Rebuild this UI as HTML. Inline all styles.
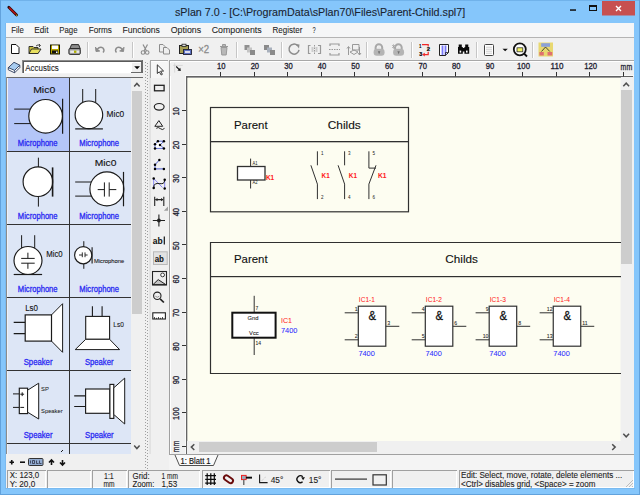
<!DOCTYPE html>
<html><head><meta charset="utf-8"><style>
*{margin:0;padding:0}html,body{width:640px;height:495px;overflow:hidden;background:#85c6fb}
svg{display:block;font-family:"Liberation Sans",sans-serif}
</style></head><body>
<svg width="640" height="495" viewBox="0 0 640 495">
<rect x="0" y="0" width="640" height="1" fill="#70b2ea" />
<rect x="0" y="0" width="1" height="495" fill="#62a2dc" />
<rect x="639" y="0" width="1" height="495" fill="#62a2dc" />
<rect x="0" y="494" width="640" height="1" fill="#62a2dc" />
<rect x="5" y="23" width="1" height="466" fill="#7abaf0" />
<rect x="5" y="488" width="630" height="1" fill="#7abaf0" />
<path d="M8.8 7.2 L16.6 15" stroke="#2a0808" fill="none" stroke-width="2.8" stroke-linecap="round"/>
<path d="M9 7.4 L15.8 14.2" stroke="#b01414" fill="none" stroke-width="1.6" />
<rect x="16" y="14.6" width="1.2" height="1.2" fill="#c8b020" />
<text x="175.00" y="15.5" font-size="11.5" fill="#1a2430" stroke="#1a2430" stroke-width="0.1" textLength="290.18" lengthAdjust="spacingAndGlyphs" >sPlan 7.0 - [C:\ProgramData\sPlan70\Files\Parent-Child.spl7]</text>
<rect x="570" y="9.3" width="6" height="1.5" fill="#111" />
<rect x="589.5" y="5.5" width="7" height="5" fill="none" stroke="#111" stroke-width="1"/>
<rect x="589" y="5" width="8" height="2" fill="#111" />
<rect x="602" y="1" width="33" height="14.5" fill="#c75050" />
<path d="M16 6 L21 11 M21 6 L16 11" stroke="#fff" fill="none" stroke-width="1.4" transform="translate(600,0)"/>
<rect x="6" y="23" width="628" height="14" fill="#f5f6f7" />
<rect x="6" y="37" width="628" height="1" fill="#b4b4b4" />
<text x="11.25" y="33" font-size="9.8" fill="#1e1e1e" stroke="#1e1e1e" stroke-width="0.08" textLength="12.56" lengthAdjust="spacingAndGlyphs" >File</text>
<text x="34.25" y="33" font-size="9.8" fill="#1e1e1e" stroke="#1e1e1e" stroke-width="0.08" textLength="14.26" lengthAdjust="spacingAndGlyphs" >Edit</text>
<text x="59.25" y="33" font-size="9.8" fill="#1e1e1e" stroke="#1e1e1e" stroke-width="0.08" textLength="18.31" lengthAdjust="spacingAndGlyphs" >Page</text>
<text x="88.75" y="33" font-size="9.8" fill="#1e1e1e" stroke="#1e1e1e" stroke-width="0.08" textLength="23.17" lengthAdjust="spacingAndGlyphs" >Forms</text>
<text x="122.50" y="33" font-size="9.8" fill="#1e1e1e" stroke="#1e1e1e" stroke-width="0.08" textLength="37.41" lengthAdjust="spacingAndGlyphs" >Functions</text>
<text x="170.75" y="33" font-size="9.8" fill="#1e1e1e" stroke="#1e1e1e" stroke-width="0.08" textLength="30.41" lengthAdjust="spacingAndGlyphs" >Options</text>
<text x="211.75" y="33" font-size="9.8" fill="#1e1e1e" stroke="#1e1e1e" stroke-width="0.08" textLength="49.91" lengthAdjust="spacingAndGlyphs" >Components</text>
<text x="272.50" y="33" font-size="9.8" fill="#1e1e1e" stroke="#1e1e1e" stroke-width="0.08" textLength="29.90" lengthAdjust="spacingAndGlyphs" >Register</text>
<text x="312.50" y="33" font-size="9.8" fill="#1e1e1e" stroke="#1e1e1e" stroke-width="0.08" textLength="3.18" lengthAdjust="spacingAndGlyphs" >?</text>
<rect x="6" y="38" width="628" height="23" fill="#f0f0f0" />
<rect x="87" y="42" width="1" height="16" fill="#c6c6c6" />
<rect x="88" y="42" width="1" height="16" fill="#ffffff" />
<rect x="132" y="42" width="1" height="16" fill="#c6c6c6" />
<rect x="133" y="42" width="1" height="16" fill="#ffffff" />
<rect x="236" y="42" width="1" height="16" fill="#c6c6c6" />
<rect x="237" y="42" width="1" height="16" fill="#ffffff" />
<rect x="281" y="42" width="1" height="16" fill="#c6c6c6" />
<rect x="282" y="42" width="1" height="16" fill="#ffffff" />
<rect x="366" y="42" width="1" height="16" fill="#c6c6c6" />
<rect x="367" y="42" width="1" height="16" fill="#ffffff" />
<rect x="411" y="42" width="1" height="16" fill="#c6c6c6" />
<rect x="412" y="42" width="1" height="16" fill="#ffffff" />
<rect x="476" y="42" width="1" height="16" fill="#c6c6c6" />
<rect x="477" y="42" width="1" height="16" fill="#ffffff" />
<rect x="532" y="42" width="1" height="16" fill="#c6c6c6" />
<rect x="533" y="42" width="1" height="16" fill="#ffffff" />
<path d="M11.5 44.5 H16 L19 47.5 V53.5 H11.5 Z" stroke="#111" fill="#fff" stroke-width="1" />
<path d="M29 46.5 H33 L34 47.5 H38 V53.5 H29 Z" stroke="#222" fill="#c8c040" stroke-width="0.9" />
<path d="M29 53.5 L31.5 49 H41 L38 53.5 Z" stroke="#222" fill="#e8e060" stroke-width="0.9" />
<path d="M36 46 Q38 44 40 45.5 M39 44 L40.5 45.5 L39 47" stroke="#333" fill="none" stroke-width="0.9" />
<rect x="50" y="44.5" width="10" height="10" fill="#1a1a00" />
<rect x="51" y="45.5" width="8" height="8" fill="#b8a800" />
<rect x="52" y="45.5" width="6" height="3.5" fill="#fff" />
<rect x="52" y="50.5" width="6" height="3" fill="#111" />
<rect x="56" y="51.5" width="1.5" height="1.5" fill="#fff" />
<path d="M71.5 44.6 H78.6 L80.3 48.8 H69.8 Z" stroke="#1a1a1a" fill="#8c8c8c" stroke-width="0.9" />
<rect x="68.9" y="48.6" width="11.4" height="5.8" rx="1.2" fill="#a8a8a8" stroke="#1a1a1a" stroke-width="0.9"/>
<rect x="70.2" y="50.6" width="9" height="2.3" fill="#e8e8e8" />
<rect x="74" y="50.6" width="2.4" height="2.3" fill="#b0b000" />
<path d="M97 49.5 Q100 46 103 48 Q105 50.5 103 52.5" stroke="#8c8c8c" fill="none" stroke-width="1.4" />
<path d="M95.5 47 L96 51.5 L100 51" stroke="#8c8c8c" fill="#8c8c8c" stroke-width="1" />
<path d="M122.5 49.5 Q119.5 46 116.5 48 Q114.5 50.5 116.5 52.5" stroke="#8c8c8c" fill="none" stroke-width="1.4" />
<path d="M124 47 L123.5 51.5 L119.5 51" stroke="#8c8c8c" fill="#8c8c8c" stroke-width="1" />
<path d="M143 44.5 L146.5 51 M147.5 44.5 L144 51" stroke="#8c8c8c" fill="none" stroke-width="1.2" />
<circle cx="143" cy="52.5" r="1.8" fill="none" stroke="#8c8c8c" stroke-width="1.1"/>
<circle cx="147.2" cy="52.5" r="1.8" fill="none" stroke="#8c8c8c" stroke-width="1.1"/>
<path d="M159.5 44.5 H163 L165 46.5 V52 H159.5 Z" stroke="#8c8c8c" fill="#eee" stroke-width="1" />
<path d="M163.5 47.5 H167 L169.5 50 V54 H163.5 Z" stroke="#8c8c8c" fill="#eee" stroke-width="1" />
<rect x="179.5" y="45.5" width="9" height="8" fill="#a69e52" stroke="#222" stroke-width="1"/>
<rect x="182" y="44.2" width="4" height="2.2" fill="#ddd" stroke="#222" stroke-width="0.8"/>
<rect x="183.5" y="49.5" width="8" height="5" fill="#5a70c0" stroke="#223" stroke-width="0.9"/>
<rect x="185" y="51" width="5" height="2" fill="#dde" />
<text x="198.20" y="52.7" font-size="10" fill="#8c8c8c" stroke="#8c8c8c" stroke-width="0.28" textLength="10.98" lengthAdjust="spacingAndGlyphs" >×2</text>
<path d="M220 46.5 H228 M222.5 46.5 V44.5 H225.5 V46.5 M221 47.5 L221.8 55 H226.2 L227 47.5 Z" stroke="#999" fill="#b8b8b8" stroke-width="1" />
<rect x="244.5" y="45" width="5" height="5" fill="#909090" />
<rect x="247" y="47.5" width="5" height="5" fill="#c4c4c4" />
<rect x="250" y="50" width="5" height="5" fill="#8a8a8a" />
<rect x="264" y="45" width="5" height="5" fill="#8a8a8a" />
<rect x="267" y="47.5" width="5" height="5" fill="#a8b0bc" />
<rect x="270" y="50" width="5" height="5" fill="#8a8a8a" />
<path d="M299 49.8 A5 5 0 1 1 297.5 45.5" stroke="#8c8c8c" fill="none" stroke-width="1.5" />
<path d="M295.5 44 L299.5 44.5 L299 48.5 Z" stroke="none" fill="#8c8c8c" stroke-width="1" />
<path d="M310.5 45.5 H308.5 V53.5 H310.5 M318 45.5 H320.5 V53.5 H318" stroke="#999" fill="none" stroke-width="1.2" />
<path d="M314.5 45 V54" stroke="#999" fill="none" stroke-width="1" stroke-dasharray="1.5 1"/>
<rect x="311.5" y="47" width="2" height="5" fill="#ccc" />
<rect x="315.5" y="47" width="2" height="5" fill="#ccc" />
<path d="M330 46 V44 H339 V46 M330 53 V55 H339 V53" stroke="#999" fill="none" stroke-width="1.2" />
<path d="M329 49.5 H340" stroke="#999" fill="none" stroke-width="1" stroke-dasharray="1.5 1"/>
<path d="M352.5 44.5 H359 V50 H352.5 Z" stroke="#999" fill="none" stroke-width="1" />
<path d="M348.5 55 V47 M347 48.5 L348.5 46.5 L350 48.5 M359.5 47 V55 M358 53 L359.5 55 L361 53 M350 52 L354 50 L358 52 L354 54.5 Z" stroke="#999" fill="none" stroke-width="1" />
<path d="M375.6 49.5 V47.6 A3.3 3.3 0 0 1 382.2 47.6 V49.5" stroke="#a8a8a8" fill="none" stroke-width="2" />
<rect x="373.6" y="48.8" width="11" height="7" rx="3.2" fill="#b4b4b4"/>
<path d="M377.9 51.3 H380.3 L379.1 54.3 Z" stroke="none" fill="#707070" stroke-width="1" />
<rect x="378.4" y="46.5" width="1.5" height="1.5" fill="#e8e8e8" />
<path d="M395.1 49.5 V47.6 A3.3 3.3 0 0 1 401.7 47.6 V49.5" stroke="#a8a8a8" fill="none" stroke-width="2" />
<rect x="393.1" y="48.8" width="11" height="7" rx="3.2" fill="#b4b4b4"/>
<path d="M397.4 51.3 H399.8 L398.6 54.3 Z" stroke="none" fill="#707070" stroke-width="1" />
<rect x="397.9" y="46.5" width="1.5" height="1.5" fill="#e8e8e8" />
<path d="M392 45 L395 48 M395 45 L392 48 M393.5 44.3 V48.7" stroke="#a0a0a0" fill="none" stroke-width="0.7" />
<text x="419.20" y="48.2" font-size="5.4" fill="#000" stroke="#000" stroke-width="0.2" font-weight="bold" textLength="2.00" lengthAdjust="spacingAndGlyphs" >1</text>
<text x="426.70" y="51" font-size="5.4" fill="#000" stroke="#000" stroke-width="0.2" font-weight="bold" textLength="3.30" lengthAdjust="spacingAndGlyphs" >2</text>
<text x="419.20" y="56.2" font-size="5.4" fill="#000" stroke="#000" stroke-width="0.2" font-weight="bold" textLength="3.00" lengthAdjust="spacingAndGlyphs" >3</text>
<path d="M422 44.6 H428.2 V46.4 M428.2 51.8 V54.6 H424" stroke="#f02828" fill="none" stroke-width="1.2" />
<path d="M424.8 53.2 L422.6 54.6 L424.8 56" stroke="#f02828" fill="#f02828" stroke-width="0.8" />
<path d="M439.5 44.5 H448.5 V52.5 L445.5 55.5 H439.5 Z" stroke="#222" fill="#fff" stroke-width="1" />
<rect x="441.6" y="45.5" width="1.8" height="9.5" fill="#7878f8" />
<rect x="444.6" y="45.5" width="1.8" height="9.5" fill="#7878f8" />
<path d="M445.5 55.5 V52.5 H448.5" stroke="#222" fill="none" stroke-width="0.8" />
<path d="M458.7 44.5 H461.8 V47 H462.8 V53.7 H458 V47 H458.7 Z M465.2 44.5 H468.3 V47 H469.2 V53.7 H464.4 V47 H465.2 Z M462.5 48 H464.7 V51.5 H462.5 Z" stroke="none" fill="#0a0a0a" stroke-width="1" />
<rect x="459.6" y="50.6" width="1.6" height="2" fill="#fff" />
<rect x="466" y="50.6" width="1.6" height="2" fill="#fff" />
<rect x="484.5" y="44.5" width="9" height="11" rx="1" fill="#fff" stroke="#444" stroke-width="1"/>
<path d="M487 46 V54 M489 46 V54 M491 46 V54 M486 47.5 H492 M486 49.5 H492 M486 51.5 H492 M486 53.5 H492" stroke="#d0d0d0" fill="none" stroke-width="0.6" />
<path d="M502.5 48.8 H507.8 L505.15 51.3 Z" stroke="none" fill="#111" stroke-width="1" />
<circle cx="519.8" cy="49.3" r="6" fill="#fff" stroke="#111" stroke-width="1.8"/>
<rect x="517" y="47.8" width="5.8" height="4" fill="#f0f060" stroke="#333" stroke-width="0.8"/>
<path d="M524 53.5 L527 56.5" stroke="#111" fill="none" stroke-width="1.8" />
<rect x="538.5" y="42.5" width="14.5" height="14" fill="#e8d870" />
<rect x="541.2" y="43.2" width="8.8" height="3.6" fill="#8aa0d8" />
<rect x="539.4" y="52" width="4.4" height="3.5" fill="#e07070" />
<rect x="547.5" y="52" width="4.8" height="3.5" fill="#e07070" />
<path d="M545.5 47 L541.5 51.5 M545.5 47 L549.8 51.5" stroke="#222" fill="none" stroke-width="0.8" />
<rect x="6" y="61" width="628" height="409" fill="#f0f0f0" />
<path d="M8.3 67.6 V69.8 L14.6 72.8 L19.8 67.6 V65.2 Z" stroke="#2a3a5a" fill="#fff" stroke-width="0.9" />
<path d="M8.3 67.6 L14 62.3 L19.8 65.2 L14.6 70.4 Z" stroke="#2a3a5a" fill="#a8ccf0" stroke-width="0.9" />
<path d="M14.6 70.4 V72.8" stroke="#2a3a5a" fill="none" stroke-width="0.8" />
<rect x="22" y="60" width="121" height="14" fill="#fff" />
<rect x="22" y="60" width="121" height="1" fill="#8a8a8a" />
<rect x="22" y="60" width="1" height="14" fill="#8a8a8a" />
<rect x="23" y="61" width="119" height="1" fill="#5a5a5a" />
<rect x="23" y="61" width="1" height="12" fill="#5a5a5a" />
<rect x="142" y="60" width="1" height="14" fill="#6a6a6a" />
<rect x="22" y="73" width="121" height="1" fill="#f4f4f4" />
<rect x="131" y="62" width="11" height="11" fill="#efefef" />
<rect x="131" y="62" width="11" height="1" fill="#fff" />
<rect x="131" y="62" width="1" height="11" fill="#fff" />
<rect x="131" y="72" width="11" height="1" fill="#6a6a6a" />
<rect x="141" y="62" width="1" height="11" fill="#6a6a6a" />
<path d="M134.2 66.3 L140 66.3 L137.1 69.2 Z" stroke="none" fill="#000" stroke-width="1" />
<text x="25.30" y="70.5" font-size="9.6" fill="#222" stroke="#222" stroke-width="0.1" textLength="33.53" lengthAdjust="spacingAndGlyphs" >Accustics</text>
<rect x="6" y="77" width="137" height="1.5" fill="#6a6a6a" />
<rect x="6" y="77" width="1" height="377" fill="#8c8c8c" />
<rect x="7" y="78" width="124" height="376" fill="#dde6f6" />
<rect x="7" y="78" width="62" height="73" fill="#b4c6f8" />
<rect x="7" y="78" width="1" height="376" fill="#eef2fa" />
<rect x="7" y="151" width="124" height="1" fill="#333" />
<rect x="7" y="224" width="124" height="1" fill="#333" />
<rect x="7" y="297" width="124" height="1" fill="#333" />
<rect x="7" y="370" width="124" height="1" fill="#333" />
<rect x="7" y="443" width="124" height="1" fill="#333" />
<rect x="69" y="78" width="1" height="376" fill="#333" />
<text x="17.80" y="146" font-size="8.6" fill="#2a2af2" stroke="#2a2af2" stroke-width="0.3" textLength="39.80" lengthAdjust="spacingAndGlyphs" >Microphone</text>
<text x="79.30" y="146" font-size="8.6" fill="#2a2af2" stroke="#2a2af2" stroke-width="0.3" textLength="39.80" lengthAdjust="spacingAndGlyphs" >Microphone</text>
<text x="17.80" y="219" font-size="8.6" fill="#2a2af2" stroke="#2a2af2" stroke-width="0.3" textLength="39.80" lengthAdjust="spacingAndGlyphs" >Microphone</text>
<text x="79.30" y="218.6" font-size="8.6" fill="#2a2af2" stroke="#2a2af2" stroke-width="0.3" textLength="39.80" lengthAdjust="spacingAndGlyphs" >Microphone</text>
<text x="17.80" y="291.6" font-size="8.6" fill="#2a2af2" stroke="#2a2af2" stroke-width="0.3" textLength="39.80" lengthAdjust="spacingAndGlyphs" >Microphone</text>
<text x="79.30" y="291.6" font-size="8.6" fill="#2a2af2" stroke="#2a2af2" stroke-width="0.3" textLength="39.80" lengthAdjust="spacingAndGlyphs" >Microphone</text>
<text x="23.70" y="364.6" font-size="8.6" fill="#2a2af2" stroke="#2a2af2" stroke-width="0.3" textLength="28.78" lengthAdjust="spacingAndGlyphs" >Speaker</text>
<text x="85.00" y="364.6" font-size="8.6" fill="#2a2af2" stroke="#2a2af2" stroke-width="0.3" textLength="28.48" lengthAdjust="spacingAndGlyphs" >Speaker</text>
<text x="23.70" y="437.6" font-size="8.6" fill="#2a2af2" stroke="#2a2af2" stroke-width="0.3" textLength="28.78" lengthAdjust="spacingAndGlyphs" >Speaker</text>
<text x="85.00" y="437.6" font-size="8.6" fill="#2a2af2" stroke="#2a2af2" stroke-width="0.3" textLength="28.68" lengthAdjust="spacingAndGlyphs" >Speaker</text>
<text x="33.20" y="93" font-size="9.2" fill="#111" stroke="#111" stroke-width="0.12" textLength="22.02" lengthAdjust="spacingAndGlyphs" >Mic0</text>
<path d="M14.2 109.1 H30 M14.2 123.6 H30" stroke="#1a1a1a" fill="none" stroke-width="1" />
<circle cx="45.6" cy="116.3" r="16.8" fill="#fff" stroke="#1a1a1a" stroke-width="1.15"/>
<path d="M62.6 98.7 V133.8" stroke="#1a1a1a" fill="none" stroke-width="1.2" />
<path d="M82.7 89 V102 M95.7 89 V102" stroke="#1a1a1a" fill="none" stroke-width="1" />
<circle cx="88.9" cy="114.8" r="13.8" fill="#fff" stroke="#1a1a1a" stroke-width="1.15"/>
<path d="M75.2 128.9 H102.9" stroke="#1a1a1a" fill="none" stroke-width="1.2" />
<text x="106.60" y="116.6" font-size="8.4" fill="#111" stroke="#111" stroke-width="0.1" textLength="17.66" lengthAdjust="spacingAndGlyphs" >Mic0</text>
<path d="M38.4 157.7 V167 M38.4 196.6 V206.6" stroke="#1a1a1a" fill="none" stroke-width="1" />
<circle cx="37.9" cy="181.7" r="14.8" fill="#fff" stroke="#1a1a1a" stroke-width="1.15"/>
<path d="M52.6 167.4 V196.6" stroke="#1a1a1a" fill="none" stroke-width="1.6" />
<text x="94.70" y="166.2" font-size="9.2" fill="#111" stroke="#111" stroke-width="0.12" textLength="21.72" lengthAdjust="spacingAndGlyphs" >Mic0</text>
<path d="M75.2 182 H91.5 M75.2 196.1 H91.5" stroke="#1a1a1a" fill="none" stroke-width="1" />
<circle cx="106.9" cy="188.9" r="17" fill="#fff" stroke="#1a1a1a" stroke-width="1.15"/>
<path d="M123.5 171.9 V206.3" stroke="#1a1a1a" fill="none" stroke-width="1.2" />
<path d="M104.4 182.4 V196.6 M109.2 182.4 V196.6 M97.7 189.6 H104.4 M109.2 189.6 H116.3" stroke="#1a1a1a" fill="none" stroke-width="1" />
<path d="M21.6 235.2 V248.5 M34.7 235.2 V248.5" stroke="#1a1a1a" fill="none" stroke-width="1" />
<circle cx="28" cy="260.5" r="14" fill="#fff" stroke="#1a1a1a" stroke-width="1.15"/>
<path d="M13.7 274.5 H42.1" stroke="#1a1a1a" fill="none" stroke-width="1.2" />
<path d="M21.2 258.4 H34.7 M21.2 263.2 H34.7 M27.9 252.7 V258.4 M27.9 263.2 V268.8" stroke="#1a1a1a" fill="none" stroke-width="1" />
<text x="46.20" y="256.6" font-size="8.4" fill="#111" stroke="#111" stroke-width="0.1" textLength="16.48" lengthAdjust="spacingAndGlyphs" >Mic0</text>
<path d="M83.8 241.2 V246.8 M83.8 263.8 V268.8" stroke="#1a1a1a" fill="none" stroke-width="1" />
<circle cx="83.2" cy="255.2" r="8.6" fill="#fff" stroke="#1a1a1a" stroke-width="1.15"/>
<path d="M92.1 247.2 V263.6" stroke="#1a1a1a" fill="none" stroke-width="1.1" />
<path d="M82.3 252.4 V257.2 M85 252.4 V257.2 M79 255 H82.3 M85 255 H87.6" stroke="#1a1a1a" fill="none" stroke-width="0.9" />
<text x="93.90" y="262.6" font-size="5.5" fill="#111" stroke="#111" stroke-width="0.07500000000000001" textLength="30.26" lengthAdjust="spacingAndGlyphs" >Microphone</text>
<text x="25.20" y="310.8" font-size="8.4" fill="#111" stroke="#111" stroke-width="0.1" textLength="12.87" lengthAdjust="spacingAndGlyphs" >Ls0</text>
<path d="M13.7 322.4 H25.2 M13.7 333.6 H25.2" stroke="#1a1a1a" fill="none" stroke-width="1.2" />
<path d="M51.5 314.9 L62.6 303.7 V352.3 L51.5 341.1 Z" stroke="#1a1a1a" fill="#fff" stroke-width="1" />
<rect x="25.2" y="314.9" width="26.3" height="26.2" fill="#fff" stroke="#1a1a1a" stroke-width="1.2"/>
<path d="M92.4 306.3 V316.4 M102.1 306.3 V316.4" stroke="#1a1a1a" fill="none" stroke-width="1.1" />
<rect x="85.7" y="316.4" width="23.9" height="22.9" fill="#fff" stroke="#1a1a1a" stroke-width="1.1"/>
<path d="M85.7 339.3 H109.6 L119.6 349.6 H75.2 Z" stroke="#1a1a1a" fill="#fff" stroke-width="1" />
<text x="113.30" y="326.6" font-size="7.2" fill="#111" stroke="#111" stroke-width="0.08" textLength="10.50" lengthAdjust="spacingAndGlyphs" >Ls0</text>
<path d="M13 393.9 H19.3 M13 407.4 H19.3" stroke="#1a1a1a" fill="none" stroke-width="1" />
<rect x="19.3" y="388.2" width="8.3" height="25.4" fill="#fff" stroke="#1a1a1a" stroke-width="1.15"/>
<path d="M27.6 390.2 L38.7 383.2 V419 L27.6 412.2 Z" stroke="#1a1a1a" fill="#fff" stroke-width="1" />
<path d="M20.3 394.2 H24.1 M22.2 392.3 V396.1 M20.3 407.4 H24.1" stroke="#1a1a1a" fill="none" stroke-width="1" />
<text x="41.10" y="390.6" font-size="6" fill="#222" stroke="#222" stroke-width="0.05" textLength="7.80" lengthAdjust="spacingAndGlyphs" >SP</text>
<text x="41.10" y="412.6" font-size="6" fill="#222" stroke="#222" stroke-width="0.05" textLength="21.50" lengthAdjust="spacingAndGlyphs" >Speaker</text>
<path d="M74.2 395.8 H85.6 M74.2 406.5 H85.6" stroke="#1a1a1a" fill="none" stroke-width="1.2" />
<rect x="85.6" y="389" width="24.3" height="24.3" fill="#fff" stroke="#1a1a1a" stroke-width="1.15"/>
<rect x="109.9" y="384.4" width="3.9" height="34" fill="#fff" stroke="#1a1a1a" stroke-width="1.15"/>
<path d="M113.8 387.8 L124.7 378.1 V424 L113.8 414.5 Z" stroke="#1a1a1a" fill="#fff" stroke-width="1" />
<path d="M61 452 L63 450" stroke="#1a1a1a" fill="none" stroke-width="1" />
<rect x="131" y="78" width="12" height="376" fill="#f0f0f0" />
<rect x="132" y="91" width="10" height="223" fill="#cdcdcd" />
<path d="M134.2 86.4 L136.9 83.4 L139.6 86.4" stroke="#505050" fill="none" stroke-width="1.5" />
<path d="M134.2 445.6 L136.9 448.6 L139.6 445.6" stroke="#505050" fill="none" stroke-width="1.5" />
<rect x="6" y="454" width="138" height="16" fill="#f0f0f0" />
<path d="M9.5 462.2 H14 M11.75 460 V464.5" stroke="#111" fill="none" stroke-width="1.6" />
<path d="M20 462.2 H25" stroke="#111" fill="none" stroke-width="1.6" />
<rect x="28.5" y="458.5" width="14.5" height="7" rx="1" fill="#93acd0" stroke="#333" stroke-width="1"/>
<path d="M30.5 460.5 v3 M32.5 460.5 h2 v3 h-2 z M36.5 460.5 v3 h2 M39.5 460.5 v3 h2" stroke="#223" fill="none" stroke-width="0.7" />
<path d="M51.5 465 V461 M49 462.5 L51.5 460 L54 462.5" stroke="#111" fill="none" stroke-width="1.6" />
<path d="M62.5 460 V464 M60 462.5 L62.5 465 L65 462.5" stroke="#111" fill="none" stroke-width="1.6" />
<rect x="145" y="62" width="1" height="1" fill="#a0a0a0" />
<rect x="147" y="63" width="1" height="1" fill="#a0a0a0" />
<rect x="145" y="65" width="1" height="1" fill="#a0a0a0" />
<rect x="147" y="66" width="1" height="1" fill="#a0a0a0" />
<rect x="145" y="68" width="1" height="1" fill="#a0a0a0" />
<rect x="147" y="69" width="1" height="1" fill="#a0a0a0" />
<rect x="145" y="71" width="1" height="1" fill="#a0a0a0" />
<rect x="147" y="72" width="1" height="1" fill="#a0a0a0" />
<rect x="145" y="74" width="1" height="1" fill="#a0a0a0" />
<rect x="147" y="75" width="1" height="1" fill="#a0a0a0" />
<rect x="145" y="77" width="1" height="1" fill="#a0a0a0" />
<rect x="147" y="78" width="1" height="1" fill="#a0a0a0" />
<rect x="145" y="80" width="1" height="1" fill="#a0a0a0" />
<rect x="147" y="81" width="1" height="1" fill="#a0a0a0" />
<rect x="145" y="83" width="1" height="1" fill="#a0a0a0" />
<rect x="147" y="84" width="1" height="1" fill="#a0a0a0" />
<rect x="145" y="86" width="1" height="1" fill="#a0a0a0" />
<rect x="147" y="87" width="1" height="1" fill="#a0a0a0" />
<rect x="145" y="89" width="1" height="1" fill="#a0a0a0" />
<rect x="147" y="90" width="1" height="1" fill="#a0a0a0" />
<rect x="145" y="92" width="1" height="1" fill="#a0a0a0" />
<rect x="147" y="93" width="1" height="1" fill="#a0a0a0" />
<rect x="145" y="95" width="1" height="1" fill="#a0a0a0" />
<rect x="147" y="96" width="1" height="1" fill="#a0a0a0" />
<rect x="145" y="98" width="1" height="1" fill="#a0a0a0" />
<rect x="147" y="99" width="1" height="1" fill="#a0a0a0" />
<rect x="145" y="101" width="1" height="1" fill="#a0a0a0" />
<rect x="147" y="102" width="1" height="1" fill="#a0a0a0" />
<rect x="145" y="104" width="1" height="1" fill="#a0a0a0" />
<rect x="147" y="105" width="1" height="1" fill="#a0a0a0" />
<rect x="145" y="107" width="1" height="1" fill="#a0a0a0" />
<rect x="147" y="108" width="1" height="1" fill="#a0a0a0" />
<rect x="145" y="110" width="1" height="1" fill="#a0a0a0" />
<rect x="147" y="111" width="1" height="1" fill="#a0a0a0" />
<rect x="145" y="113" width="1" height="1" fill="#a0a0a0" />
<rect x="147" y="114" width="1" height="1" fill="#a0a0a0" />
<rect x="145" y="116" width="1" height="1" fill="#a0a0a0" />
<rect x="147" y="117" width="1" height="1" fill="#a0a0a0" />
<rect x="145" y="119" width="1" height="1" fill="#a0a0a0" />
<rect x="147" y="120" width="1" height="1" fill="#a0a0a0" />
<rect x="145" y="122" width="1" height="1" fill="#a0a0a0" />
<rect x="147" y="123" width="1" height="1" fill="#a0a0a0" />
<rect x="145" y="125" width="1" height="1" fill="#a0a0a0" />
<rect x="147" y="126" width="1" height="1" fill="#a0a0a0" />
<rect x="145" y="128" width="1" height="1" fill="#a0a0a0" />
<rect x="147" y="129" width="1" height="1" fill="#a0a0a0" />
<rect x="145" y="131" width="1" height="1" fill="#a0a0a0" />
<rect x="147" y="132" width="1" height="1" fill="#a0a0a0" />
<rect x="145" y="134" width="1" height="1" fill="#a0a0a0" />
<rect x="147" y="135" width="1" height="1" fill="#a0a0a0" />
<rect x="145" y="137" width="1" height="1" fill="#a0a0a0" />
<rect x="147" y="138" width="1" height="1" fill="#a0a0a0" />
<rect x="145" y="140" width="1" height="1" fill="#a0a0a0" />
<rect x="147" y="141" width="1" height="1" fill="#a0a0a0" />
<rect x="145" y="143" width="1" height="1" fill="#a0a0a0" />
<rect x="147" y="144" width="1" height="1" fill="#a0a0a0" />
<rect x="145" y="146" width="1" height="1" fill="#a0a0a0" />
<rect x="147" y="147" width="1" height="1" fill="#a0a0a0" />
<rect x="145" y="149" width="1" height="1" fill="#a0a0a0" />
<rect x="147" y="150" width="1" height="1" fill="#a0a0a0" />
<rect x="145" y="152" width="1" height="1" fill="#a0a0a0" />
<rect x="147" y="153" width="1" height="1" fill="#a0a0a0" />
<rect x="145" y="155" width="1" height="1" fill="#a0a0a0" />
<rect x="147" y="156" width="1" height="1" fill="#a0a0a0" />
<rect x="145" y="158" width="1" height="1" fill="#a0a0a0" />
<rect x="147" y="159" width="1" height="1" fill="#a0a0a0" />
<rect x="145" y="161" width="1" height="1" fill="#a0a0a0" />
<rect x="147" y="162" width="1" height="1" fill="#a0a0a0" />
<rect x="145" y="164" width="1" height="1" fill="#a0a0a0" />
<rect x="147" y="165" width="1" height="1" fill="#a0a0a0" />
<rect x="145" y="167" width="1" height="1" fill="#a0a0a0" />
<rect x="147" y="168" width="1" height="1" fill="#a0a0a0" />
<rect x="145" y="170" width="1" height="1" fill="#a0a0a0" />
<rect x="147" y="171" width="1" height="1" fill="#a0a0a0" />
<rect x="145" y="173" width="1" height="1" fill="#a0a0a0" />
<rect x="147" y="174" width="1" height="1" fill="#a0a0a0" />
<rect x="145" y="176" width="1" height="1" fill="#a0a0a0" />
<rect x="147" y="177" width="1" height="1" fill="#a0a0a0" />
<rect x="145" y="179" width="1" height="1" fill="#a0a0a0" />
<rect x="147" y="180" width="1" height="1" fill="#a0a0a0" />
<rect x="145" y="182" width="1" height="1" fill="#a0a0a0" />
<rect x="147" y="183" width="1" height="1" fill="#a0a0a0" />
<rect x="145" y="185" width="1" height="1" fill="#a0a0a0" />
<rect x="147" y="186" width="1" height="1" fill="#a0a0a0" />
<rect x="145" y="188" width="1" height="1" fill="#a0a0a0" />
<rect x="147" y="189" width="1" height="1" fill="#a0a0a0" />
<rect x="145" y="191" width="1" height="1" fill="#a0a0a0" />
<rect x="147" y="192" width="1" height="1" fill="#a0a0a0" />
<rect x="145" y="194" width="1" height="1" fill="#a0a0a0" />
<rect x="147" y="195" width="1" height="1" fill="#a0a0a0" />
<rect x="145" y="197" width="1" height="1" fill="#a0a0a0" />
<rect x="147" y="198" width="1" height="1" fill="#a0a0a0" />
<rect x="145" y="200" width="1" height="1" fill="#a0a0a0" />
<rect x="147" y="201" width="1" height="1" fill="#a0a0a0" />
<rect x="145" y="203" width="1" height="1" fill="#a0a0a0" />
<rect x="147" y="204" width="1" height="1" fill="#a0a0a0" />
<rect x="145" y="206" width="1" height="1" fill="#a0a0a0" />
<rect x="147" y="207" width="1" height="1" fill="#a0a0a0" />
<rect x="145" y="209" width="1" height="1" fill="#a0a0a0" />
<rect x="147" y="210" width="1" height="1" fill="#a0a0a0" />
<rect x="145" y="212" width="1" height="1" fill="#a0a0a0" />
<rect x="147" y="213" width="1" height="1" fill="#a0a0a0" />
<rect x="145" y="215" width="1" height="1" fill="#a0a0a0" />
<rect x="147" y="216" width="1" height="1" fill="#a0a0a0" />
<rect x="145" y="218" width="1" height="1" fill="#a0a0a0" />
<rect x="147" y="219" width="1" height="1" fill="#a0a0a0" />
<rect x="145" y="221" width="1" height="1" fill="#a0a0a0" />
<rect x="147" y="222" width="1" height="1" fill="#a0a0a0" />
<rect x="145" y="224" width="1" height="1" fill="#a0a0a0" />
<rect x="147" y="225" width="1" height="1" fill="#a0a0a0" />
<rect x="145" y="227" width="1" height="1" fill="#a0a0a0" />
<rect x="147" y="228" width="1" height="1" fill="#a0a0a0" />
<rect x="145" y="230" width="1" height="1" fill="#a0a0a0" />
<rect x="147" y="231" width="1" height="1" fill="#a0a0a0" />
<rect x="145" y="233" width="1" height="1" fill="#a0a0a0" />
<rect x="147" y="234" width="1" height="1" fill="#a0a0a0" />
<rect x="145" y="236" width="1" height="1" fill="#a0a0a0" />
<rect x="147" y="237" width="1" height="1" fill="#a0a0a0" />
<rect x="145" y="239" width="1" height="1" fill="#a0a0a0" />
<rect x="147" y="240" width="1" height="1" fill="#a0a0a0" />
<rect x="145" y="242" width="1" height="1" fill="#a0a0a0" />
<rect x="147" y="243" width="1" height="1" fill="#a0a0a0" />
<rect x="145" y="245" width="1" height="1" fill="#a0a0a0" />
<rect x="147" y="246" width="1" height="1" fill="#a0a0a0" />
<rect x="145" y="248" width="1" height="1" fill="#a0a0a0" />
<rect x="147" y="249" width="1" height="1" fill="#a0a0a0" />
<rect x="145" y="251" width="1" height="1" fill="#a0a0a0" />
<rect x="147" y="252" width="1" height="1" fill="#a0a0a0" />
<rect x="145" y="254" width="1" height="1" fill="#a0a0a0" />
<rect x="147" y="255" width="1" height="1" fill="#a0a0a0" />
<rect x="145" y="257" width="1" height="1" fill="#a0a0a0" />
<rect x="147" y="258" width="1" height="1" fill="#a0a0a0" />
<rect x="145" y="260" width="1" height="1" fill="#a0a0a0" />
<rect x="147" y="261" width="1" height="1" fill="#a0a0a0" />
<rect x="145" y="263" width="1" height="1" fill="#a0a0a0" />
<rect x="147" y="264" width="1" height="1" fill="#a0a0a0" />
<rect x="145" y="266" width="1" height="1" fill="#a0a0a0" />
<rect x="147" y="267" width="1" height="1" fill="#a0a0a0" />
<rect x="145" y="269" width="1" height="1" fill="#a0a0a0" />
<rect x="147" y="270" width="1" height="1" fill="#a0a0a0" />
<rect x="145" y="272" width="1" height="1" fill="#a0a0a0" />
<rect x="147" y="273" width="1" height="1" fill="#a0a0a0" />
<rect x="145" y="275" width="1" height="1" fill="#a0a0a0" />
<rect x="147" y="276" width="1" height="1" fill="#a0a0a0" />
<rect x="145" y="278" width="1" height="1" fill="#a0a0a0" />
<rect x="147" y="279" width="1" height="1" fill="#a0a0a0" />
<rect x="145" y="281" width="1" height="1" fill="#a0a0a0" />
<rect x="147" y="282" width="1" height="1" fill="#a0a0a0" />
<rect x="145" y="284" width="1" height="1" fill="#a0a0a0" />
<rect x="147" y="285" width="1" height="1" fill="#a0a0a0" />
<rect x="145" y="287" width="1" height="1" fill="#a0a0a0" />
<rect x="147" y="288" width="1" height="1" fill="#a0a0a0" />
<rect x="145" y="290" width="1" height="1" fill="#a0a0a0" />
<rect x="147" y="291" width="1" height="1" fill="#a0a0a0" />
<rect x="145" y="293" width="1" height="1" fill="#a0a0a0" />
<rect x="147" y="294" width="1" height="1" fill="#a0a0a0" />
<rect x="145" y="296" width="1" height="1" fill="#a0a0a0" />
<rect x="147" y="297" width="1" height="1" fill="#a0a0a0" />
<rect x="145" y="299" width="1" height="1" fill="#a0a0a0" />
<rect x="147" y="300" width="1" height="1" fill="#a0a0a0" />
<rect x="145" y="302" width="1" height="1" fill="#a0a0a0" />
<rect x="147" y="303" width="1" height="1" fill="#a0a0a0" />
<rect x="145" y="305" width="1" height="1" fill="#a0a0a0" />
<rect x="147" y="306" width="1" height="1" fill="#a0a0a0" />
<rect x="145" y="308" width="1" height="1" fill="#a0a0a0" />
<rect x="147" y="309" width="1" height="1" fill="#a0a0a0" />
<rect x="145" y="311" width="1" height="1" fill="#a0a0a0" />
<rect x="147" y="312" width="1" height="1" fill="#a0a0a0" />
<rect x="145" y="314" width="1" height="1" fill="#a0a0a0" />
<rect x="147" y="315" width="1" height="1" fill="#a0a0a0" />
<rect x="145" y="317" width="1" height="1" fill="#a0a0a0" />
<rect x="147" y="318" width="1" height="1" fill="#a0a0a0" />
<rect x="145" y="320" width="1" height="1" fill="#a0a0a0" />
<rect x="147" y="321" width="1" height="1" fill="#a0a0a0" />
<rect x="145" y="323" width="1" height="1" fill="#a0a0a0" />
<rect x="147" y="324" width="1" height="1" fill="#a0a0a0" />
<rect x="145" y="326" width="1" height="1" fill="#a0a0a0" />
<rect x="147" y="327" width="1" height="1" fill="#a0a0a0" />
<rect x="145" y="329" width="1" height="1" fill="#a0a0a0" />
<rect x="147" y="330" width="1" height="1" fill="#a0a0a0" />
<rect x="145" y="332" width="1" height="1" fill="#a0a0a0" />
<rect x="147" y="333" width="1" height="1" fill="#a0a0a0" />
<rect x="145" y="335" width="1" height="1" fill="#a0a0a0" />
<rect x="147" y="336" width="1" height="1" fill="#a0a0a0" />
<rect x="145" y="338" width="1" height="1" fill="#a0a0a0" />
<rect x="147" y="339" width="1" height="1" fill="#a0a0a0" />
<rect x="145" y="341" width="1" height="1" fill="#a0a0a0" />
<rect x="147" y="342" width="1" height="1" fill="#a0a0a0" />
<rect x="145" y="344" width="1" height="1" fill="#a0a0a0" />
<rect x="147" y="345" width="1" height="1" fill="#a0a0a0" />
<rect x="145" y="347" width="1" height="1" fill="#a0a0a0" />
<rect x="147" y="348" width="1" height="1" fill="#a0a0a0" />
<rect x="145" y="350" width="1" height="1" fill="#a0a0a0" />
<rect x="147" y="351" width="1" height="1" fill="#a0a0a0" />
<rect x="145" y="353" width="1" height="1" fill="#a0a0a0" />
<rect x="147" y="354" width="1" height="1" fill="#a0a0a0" />
<rect x="145" y="356" width="1" height="1" fill="#a0a0a0" />
<rect x="147" y="357" width="1" height="1" fill="#a0a0a0" />
<rect x="145" y="359" width="1" height="1" fill="#a0a0a0" />
<rect x="147" y="360" width="1" height="1" fill="#a0a0a0" />
<rect x="145" y="362" width="1" height="1" fill="#a0a0a0" />
<rect x="147" y="363" width="1" height="1" fill="#a0a0a0" />
<rect x="145" y="365" width="1" height="1" fill="#a0a0a0" />
<rect x="147" y="366" width="1" height="1" fill="#a0a0a0" />
<rect x="145" y="368" width="1" height="1" fill="#a0a0a0" />
<rect x="147" y="369" width="1" height="1" fill="#a0a0a0" />
<rect x="145" y="371" width="1" height="1" fill="#a0a0a0" />
<rect x="147" y="372" width="1" height="1" fill="#a0a0a0" />
<rect x="145" y="374" width="1" height="1" fill="#a0a0a0" />
<rect x="147" y="375" width="1" height="1" fill="#a0a0a0" />
<rect x="145" y="377" width="1" height="1" fill="#a0a0a0" />
<rect x="147" y="378" width="1" height="1" fill="#a0a0a0" />
<rect x="145" y="380" width="1" height="1" fill="#a0a0a0" />
<rect x="147" y="381" width="1" height="1" fill="#a0a0a0" />
<rect x="145" y="383" width="1" height="1" fill="#a0a0a0" />
<rect x="147" y="384" width="1" height="1" fill="#a0a0a0" />
<rect x="145" y="386" width="1" height="1" fill="#a0a0a0" />
<rect x="147" y="387" width="1" height="1" fill="#a0a0a0" />
<rect x="145" y="389" width="1" height="1" fill="#a0a0a0" />
<rect x="147" y="390" width="1" height="1" fill="#a0a0a0" />
<rect x="145" y="392" width="1" height="1" fill="#a0a0a0" />
<rect x="147" y="393" width="1" height="1" fill="#a0a0a0" />
<rect x="145" y="395" width="1" height="1" fill="#a0a0a0" />
<rect x="147" y="396" width="1" height="1" fill="#a0a0a0" />
<rect x="145" y="398" width="1" height="1" fill="#a0a0a0" />
<rect x="147" y="399" width="1" height="1" fill="#a0a0a0" />
<rect x="145" y="401" width="1" height="1" fill="#a0a0a0" />
<rect x="147" y="402" width="1" height="1" fill="#a0a0a0" />
<rect x="145" y="404" width="1" height="1" fill="#a0a0a0" />
<rect x="147" y="405" width="1" height="1" fill="#a0a0a0" />
<rect x="145" y="407" width="1" height="1" fill="#a0a0a0" />
<rect x="147" y="408" width="1" height="1" fill="#a0a0a0" />
<rect x="145" y="410" width="1" height="1" fill="#a0a0a0" />
<rect x="147" y="411" width="1" height="1" fill="#a0a0a0" />
<rect x="145" y="413" width="1" height="1" fill="#a0a0a0" />
<rect x="147" y="414" width="1" height="1" fill="#a0a0a0" />
<rect x="145" y="416" width="1" height="1" fill="#a0a0a0" />
<rect x="147" y="417" width="1" height="1" fill="#a0a0a0" />
<rect x="145" y="419" width="1" height="1" fill="#a0a0a0" />
<rect x="147" y="420" width="1" height="1" fill="#a0a0a0" />
<rect x="145" y="422" width="1" height="1" fill="#a0a0a0" />
<rect x="147" y="423" width="1" height="1" fill="#a0a0a0" />
<rect x="145" y="425" width="1" height="1" fill="#a0a0a0" />
<rect x="147" y="426" width="1" height="1" fill="#a0a0a0" />
<rect x="145" y="428" width="1" height="1" fill="#a0a0a0" />
<rect x="147" y="429" width="1" height="1" fill="#a0a0a0" />
<rect x="145" y="431" width="1" height="1" fill="#a0a0a0" />
<rect x="147" y="432" width="1" height="1" fill="#a0a0a0" />
<rect x="145" y="434" width="1" height="1" fill="#a0a0a0" />
<rect x="147" y="435" width="1" height="1" fill="#a0a0a0" />
<rect x="145" y="437" width="1" height="1" fill="#a0a0a0" />
<rect x="147" y="438" width="1" height="1" fill="#a0a0a0" />
<rect x="145" y="440" width="1" height="1" fill="#a0a0a0" />
<rect x="147" y="441" width="1" height="1" fill="#a0a0a0" />
<rect x="145" y="443" width="1" height="1" fill="#a0a0a0" />
<rect x="147" y="444" width="1" height="1" fill="#a0a0a0" />
<rect x="145" y="446" width="1" height="1" fill="#a0a0a0" />
<rect x="147" y="447" width="1" height="1" fill="#a0a0a0" />
<rect x="145" y="449" width="1" height="1" fill="#a0a0a0" />
<rect x="147" y="450" width="1" height="1" fill="#a0a0a0" />
<rect x="145" y="452" width="1" height="1" fill="#a0a0a0" />
<rect x="147" y="453" width="1" height="1" fill="#a0a0a0" />
<rect x="145" y="455" width="1" height="1" fill="#a0a0a0" />
<rect x="147" y="456" width="1" height="1" fill="#a0a0a0" />
<rect x="145" y="458" width="1" height="1" fill="#a0a0a0" />
<rect x="147" y="459" width="1" height="1" fill="#a0a0a0" />
<rect x="145" y="461" width="1" height="1" fill="#a0a0a0" />
<rect x="147" y="462" width="1" height="1" fill="#a0a0a0" />
<rect x="145" y="464" width="1" height="1" fill="#a0a0a0" />
<rect x="147" y="465" width="1" height="1" fill="#a0a0a0" />
<rect x="145" y="467" width="1" height="1" fill="#a0a0a0" />
<rect x="147" y="468" width="1" height="1" fill="#a0a0a0" />
<rect x="149" y="61" width="1" height="393" fill="#e4e4e4" />
<rect x="150" y="60" width="18" height="18" fill="#f6f6f6" />
<rect x="150" y="60" width="18" height="1" fill="#a8a8a8" />
<rect x="150" y="60" width="1" height="18" fill="#a8a8a8" />
<rect x="151" y="61" width="16" height="1" fill="#ffffff" />
<rect x="150" y="78" width="1" height="376" fill="#e2e2e2" />
<rect x="169" y="61" width="1" height="393" fill="#a0a0a0" />
<path d="M157.3 64.8 L157.3 73.5 L159.3 71.8 L161.2 75 L162.4 74.3 L160.6 71.2 L163.6 71 Z" stroke="#222" fill="#fff" stroke-width="0.9" />
<rect x="154.5" y="85.3" width="9.6" height="5.5" fill="none" stroke="#222" stroke-width="1.3"/>
<ellipse cx="159.2" cy="106.8" rx="4.9" ry="3.3" fill="none" stroke="#222" stroke-width="1.2"/>
<path d="M154.8 126.3 L158.9 120.6 L162.7 126.3 Z" stroke="#222" fill="none" stroke-width="1" />
<path d="M156.3 128.3 Q158.2 126.6 160.3 128.6 Q162.4 130.6 164.5 128.4" stroke="#222" fill="none" stroke-width="1" />
<path d="M157.9 141.2 H163.9 L160 144.9 L163.9 148.4 H155 V144.2 Z" stroke="#5060d0" fill="#fff" stroke-width="0.9" />
<circle cx="157.9" cy="141.2" r="1.25" fill="#000"/>
<circle cx="163.9" cy="141.2" r="1.25" fill="#000"/>
<circle cx="155" cy="144.2" r="1.25" fill="#000"/>
<circle cx="160" cy="144.9" r="1.25" fill="#000"/>
<circle cx="155" cy="148.4" r="1.25" fill="#000"/>
<circle cx="163.9" cy="148.4" r="1.25" fill="#000"/>
<path d="M159.4 160 L155 164.7 V168.9 H163.9" stroke="#5060d0" fill="none" stroke-width="1" />
<circle cx="159.4" cy="160" r="1.25" fill="#000"/>
<circle cx="155" cy="164.7" r="1.25" fill="#000"/>
<circle cx="155" cy="168.9" r="1.25" fill="#000"/>
<circle cx="163.9" cy="168.9" r="1.25" fill="#000"/>
<path d="M153.7 178.5 V187.9 M164.7 179.8 V188.5 M153.7 178.5 L162.5 187.5" stroke="#7a7af0" fill="none" stroke-width="0.9" />
<path d="M153.7 187.9 C153.7 178.5 164.7 188.5 164.7 179.8" stroke="#111" fill="none" stroke-width="1" />
<circle cx="153.7" cy="178.5" r="1.25" fill="#000"/>
<circle cx="153.7" cy="187.9" r="1.25" fill="#000"/>
<circle cx="164.7" cy="179.8" r="1.25" fill="#000"/>
<circle cx="164.7" cy="188.5" r="1.25" fill="#000"/>
<path d="M154.7 196.8 V206 M163.8 196.8 V206 M155.5 199.6 H163" stroke="#222" fill="none" stroke-width="1.1" />
<path d="M155.2 199.6 L157.5 198 V201.2 Z M163.3 199.6 L161 198 V201.2 Z" stroke="none" fill="#222" stroke-width="1" />
<path d="M163.8 210.8 L168 206.5 V210.8 Z" stroke="none" fill="#a0a0a0" stroke-width="1" />
<path d="M152.8 220.5 H165 M158.9 214.4 V226.5" stroke="#222" fill="none" stroke-width="1.1" />
<circle cx="158.9" cy="220.5" r="1.9" fill="#222"/>
<text x="152.80" y="244" font-size="8.5" fill="#111" stroke="#111" stroke-width="0.05" font-weight="bold" textLength="9.89" lengthAdjust="spacingAndGlyphs" >ab</text>
<rect x="163.7" y="236.5" width="1.2" height="8" fill="#111" />
<rect x="153.5" y="251.8" width="13.7" height="12.7" fill="#e2e2e2" stroke="#b8b8b8" stroke-width="1"/>
<text x="154.70" y="261.8" font-size="8.5" fill="#111" stroke="#111" stroke-width="0.05" font-weight="bold" textLength="9.28" lengthAdjust="spacingAndGlyphs" >ab</text>
<rect x="152.5" y="271.5" width="14" height="13.5" fill="#ececec" stroke="#222" stroke-width="1.1"/>
<path d="M153 284.6 L158.2 279.6 L165.8 284.6 Z" stroke="#222" fill="#c4c4c4" stroke-width="1" />
<circle cx="162.6" cy="274.9" r="1.9" fill="#fff" stroke="#222" stroke-width="0.9"/>
<circle cx="157.3" cy="295.8" r="3.7" fill="none" stroke="#222" stroke-width="1.1"/>
<path d="M155.3 296.2 Q157.3 298.3 159.3 296.2" stroke="#777" fill="none" stroke-width="0.8" />
<path d="M160.1 298.8 L163.9 302.5" stroke="#222" fill="none" stroke-width="1.7" />
<rect x="152.8" y="312.8" width="12.6" height="6.2" fill="#fff" stroke="#222" stroke-width="1.1"/>
<path d="M154.5 319 V317 M156.5 319 V317.8 M158.5 319 V317 M160.5 319 V317.8 M162.5 319 V317" stroke="#222" fill="none" stroke-width="0.8" />
<rect x="169" y="60" width="465" height="1" fill="#a8a8a8" />
<rect x="170" y="61" width="464" height="1" fill="#ffffff" />
<rect x="170" y="61" width="1" height="393" fill="#ffffff" />
<rect x="170" y="63" width="464" height="13" fill="#f0f0f0" />
<rect x="171" y="63" width="15" height="391" fill="#f0f0f0" />
<rect x="186" y="76" width="447" height="1.6" fill="#646464" />
<rect x="186" y="76" width="1.6" height="378" fill="#646464" />
<rect x="185" y="75" width="449" height="1" fill="#fafafa" />
<rect x="185" y="75" width="1" height="379" fill="#fafafa" />
<rect x="220" y="72" width="1" height="4.5" fill="#333" />
<text x="217.05" y="69.4" font-size="8.2" fill="#1e2232" stroke="#1e2232" stroke-width="0.3" textLength="8.48" lengthAdjust="spacingAndGlyphs" >10</text>
<rect x="254" y="72" width="1" height="4.5" fill="#333" />
<text x="250.63" y="69.4" font-size="8.2" fill="#1e2232" stroke="#1e2232" stroke-width="0.3" textLength="8.48" lengthAdjust="spacingAndGlyphs" >20</text>
<rect x="287" y="72" width="1" height="4.5" fill="#333" />
<text x="284.21" y="69.4" font-size="8.2" fill="#1e2232" stroke="#1e2232" stroke-width="0.3" textLength="8.48" lengthAdjust="spacingAndGlyphs" >30</text>
<rect x="321" y="72" width="1" height="4.5" fill="#333" />
<text x="317.79" y="69.4" font-size="8.2" fill="#1e2232" stroke="#1e2232" stroke-width="0.3" textLength="8.48" lengthAdjust="spacingAndGlyphs" >40</text>
<rect x="354" y="72" width="1" height="4.5" fill="#333" />
<text x="351.37" y="69.4" font-size="8.2" fill="#1e2232" stroke="#1e2232" stroke-width="0.3" textLength="8.48" lengthAdjust="spacingAndGlyphs" >50</text>
<rect x="388" y="72" width="1" height="4.5" fill="#333" />
<text x="384.95" y="69.4" font-size="8.2" fill="#1e2232" stroke="#1e2232" stroke-width="0.3" textLength="8.48" lengthAdjust="spacingAndGlyphs" >60</text>
<rect x="422" y="72" width="1" height="4.5" fill="#333" />
<text x="418.53" y="69.4" font-size="8.2" fill="#1e2232" stroke="#1e2232" stroke-width="0.3" textLength="8.48" lengthAdjust="spacingAndGlyphs" >70</text>
<rect x="455" y="72" width="1" height="4.5" fill="#333" />
<text x="452.11" y="69.4" font-size="8.2" fill="#1e2232" stroke="#1e2232" stroke-width="0.3" textLength="8.48" lengthAdjust="spacingAndGlyphs" >80</text>
<rect x="489" y="72" width="1" height="4.5" fill="#333" />
<text x="485.69" y="69.4" font-size="8.2" fill="#1e2232" stroke="#1e2232" stroke-width="0.3" textLength="8.48" lengthAdjust="spacingAndGlyphs" >90</text>
<rect x="522" y="72" width="1" height="4.5" fill="#333" />
<text x="517.04" y="69.4" font-size="8.2" fill="#1e2232" stroke="#1e2232" stroke-width="0.3" textLength="12.93" lengthAdjust="spacingAndGlyphs" >100</text>
<rect x="556" y="72" width="1" height="4.5" fill="#333" />
<text x="550.62" y="69.4" font-size="8.2" fill="#1e2232" stroke="#1e2232" stroke-width="0.3" textLength="12.91" lengthAdjust="spacingAndGlyphs" >110</text>
<rect x="589" y="72" width="1" height="4.5" fill="#333" />
<text x="584.21" y="69.4" font-size="8.2" fill="#1e2232" stroke="#1e2232" stroke-width="0.3" textLength="12.93" lengthAdjust="spacingAndGlyphs" >120</text>
<rect x="623" y="72" width="1" height="4.5" fill="#333" />
<text x="620.60" y="69.8" font-size="9.6" fill="#1e2232" stroke="#1e2232" stroke-width="0.27999999999999997" textLength="11.59" lengthAdjust="spacingAndGlyphs" >mm</text>
<path d="M174.7 63.3 V72.6 M173.3 65.4 H182.7" stroke="#d0d0d0" fill="none" stroke-width="0.8" />
<path d="M176.2 66.5 L179.6 69.9" stroke="#111" fill="none" stroke-width="1.1" />
<path d="M180.8 71 L177.5 70.5 L180.3 67.7 Z" stroke="none" fill="#111" stroke-width="1" />
<rect x="182" y="110" width="4" height="1" fill="#333" />
<g transform="translate(178.9,111.20) rotate(-90)">
<text x="-4.40" y="0" font-size="8.2" fill="#1e2232" stroke="#1e2232" stroke-width="0.3" textLength="8.39" lengthAdjust="spacingAndGlyphs" >10</text>
</g>
<rect x="182" y="144" width="4" height="1" fill="#333" />
<g transform="translate(178.9,144.78) rotate(-90)">
<text x="-4.40" y="0" font-size="8.2" fill="#1e2232" stroke="#1e2232" stroke-width="0.3" textLength="8.39" lengthAdjust="spacingAndGlyphs" >20</text>
</g>
<rect x="182" y="177" width="4" height="1" fill="#333" />
<g transform="translate(178.9,178.36) rotate(-90)">
<text x="-4.40" y="0" font-size="8.2" fill="#1e2232" stroke="#1e2232" stroke-width="0.3" textLength="8.39" lengthAdjust="spacingAndGlyphs" >30</text>
</g>
<rect x="182" y="211" width="4" height="1" fill="#333" />
<g transform="translate(178.9,211.94) rotate(-90)">
<text x="-4.40" y="0" font-size="8.2" fill="#1e2232" stroke="#1e2232" stroke-width="0.3" textLength="8.39" lengthAdjust="spacingAndGlyphs" >40</text>
</g>
<rect x="182" y="244" width="4" height="1" fill="#333" />
<g transform="translate(178.9,245.52) rotate(-90)">
<text x="-4.40" y="0" font-size="8.2" fill="#1e2232" stroke="#1e2232" stroke-width="0.3" textLength="8.39" lengthAdjust="spacingAndGlyphs" >50</text>
</g>
<rect x="182" y="278" width="4" height="1" fill="#333" />
<g transform="translate(178.9,279.10) rotate(-90)">
<text x="-4.40" y="0" font-size="8.2" fill="#1e2232" stroke="#1e2232" stroke-width="0.3" textLength="8.39" lengthAdjust="spacingAndGlyphs" >60</text>
</g>
<rect x="182" y="312" width="4" height="1" fill="#333" />
<g transform="translate(178.9,312.68) rotate(-90)">
<text x="-4.40" y="0" font-size="8.2" fill="#1e2232" stroke="#1e2232" stroke-width="0.3" textLength="8.39" lengthAdjust="spacingAndGlyphs" >70</text>
</g>
<rect x="182" y="345" width="4" height="1" fill="#333" />
<g transform="translate(178.9,346.26) rotate(-90)">
<text x="-4.40" y="0" font-size="8.2" fill="#1e2232" stroke="#1e2232" stroke-width="0.3" textLength="8.39" lengthAdjust="spacingAndGlyphs" >80</text>
</g>
<rect x="182" y="379" width="4" height="1" fill="#333" />
<g transform="translate(178.9,379.84) rotate(-90)">
<text x="-4.40" y="0" font-size="8.2" fill="#1e2232" stroke="#1e2232" stroke-width="0.3" textLength="8.39" lengthAdjust="spacingAndGlyphs" >90</text>
</g>
<rect x="182" y="412" width="4" height="1" fill="#333" />
<g transform="translate(178.9,413.42) rotate(-90)">
<text x="-6.60" y="0" font-size="8.2" fill="#1e2232" stroke="#1e2232" stroke-width="0.3" textLength="12.78" lengthAdjust="spacingAndGlyphs" >100</text>
</g>
<rect x="182" y="446" width="4" height="1" fill="#333" />
<g transform="translate(179.4,446.5) rotate(-90)">
<text x="-6.00" y="0" font-size="9.6" fill="#1e2232" stroke="#1e2232" stroke-width="0.27999999999999997" textLength="11.99" lengthAdjust="spacingAndGlyphs" >mm</text>
</g>
<rect x="187.5" y="78" width="433" height="363.5" fill="#fdfdf1" />
<rect x="210.5" y="107.5" width="198" height="104.3" fill="none" stroke="#303030" stroke-width="1.2"/>
<rect x="210.5" y="141" width="198" height="1.3" fill="#303030" />
<text x="234.00" y="128.6" font-size="11.6" fill="#111" stroke="#111" stroke-width="0.12" textLength="33.63" lengthAdjust="spacingAndGlyphs" >Parent</text>
<text x="327.80" y="128.8" font-size="11.6" fill="#111" stroke="#111" stroke-width="0.12" textLength="32.99" lengthAdjust="spacingAndGlyphs" >Childs</text>
<path d="M250.6 158.6 V166.3 M250.6 180 V188.5" stroke="#303030" fill="none" stroke-width="1" />
<rect x="237.5" y="166.5" width="27.5" height="13.5" fill="#fff" stroke="#303030" stroke-width="1.3"/>
<text x="252.50" y="165.4" font-size="4.5" fill="#222" stroke="#222" stroke-width="0.024999999999999994" textLength="5.04" lengthAdjust="spacingAndGlyphs" >A1</text>
<text x="252.50" y="184.4" font-size="4.5" fill="#222" stroke="#222" stroke-width="0.024999999999999994" textLength="5.04" lengthAdjust="spacingAndGlyphs" >A2</text>
<text x="265.90" y="179.6" font-size="7.5" fill="#ff2020" stroke="#ff2020" stroke-width="0.05" font-weight="bold" textLength="8.25" lengthAdjust="spacingAndGlyphs" >K1</text>
<path d="M317.4 151.3 V165.3 M310.9 165.3 L317.4 184.1 V199.1" stroke="#303030" fill="none" stroke-width="1" />
<text x="320.90" y="154.5" font-size="4.5" fill="#222" stroke="#222" stroke-width="0.024999999999999994" >1</text>
<text x="320.90" y="198.5" font-size="4.5" fill="#222" stroke="#222" stroke-width="0.024999999999999994" >2</text>
<text x="321.60" y="177.9" font-size="7.5" fill="#ff2020" stroke="#ff2020" stroke-width="0.05" font-weight="bold" textLength="8.15" lengthAdjust="spacingAndGlyphs" >K1</text>
<path d="M344.59999999999997 151.3 V165.3 M338.09999999999997 165.3 L344.59999999999997 184.1 V199.1" stroke="#303030" fill="none" stroke-width="1" />
<text x="348.10" y="154.5" font-size="4.5" fill="#222" stroke="#222" stroke-width="0.024999999999999994" >3</text>
<text x="348.10" y="198.5" font-size="4.5" fill="#222" stroke="#222" stroke-width="0.024999999999999994" >4</text>
<text x="348.80" y="177.9" font-size="7.5" fill="#ff2020" stroke="#ff2020" stroke-width="0.05" font-weight="bold" textLength="8.15" lengthAdjust="spacingAndGlyphs" >K1</text>
<path d="M368.9 151.3 V168.1 H376 M368.9 199.1 V184.1 L376 165.3" stroke="#303030" fill="none" stroke-width="1" />
<text x="372.40" y="154.5" font-size="4.5" fill="#222" stroke="#222" stroke-width="0.024999999999999994" >5</text>
<text x="372.40" y="198.5" font-size="4.5" fill="#222" stroke="#222" stroke-width="0.024999999999999994" >6</text>
<text x="377.90" y="177.9" font-size="7.5" fill="#ff2020" stroke="#ff2020" stroke-width="0.05" font-weight="bold" textLength="8.55" lengthAdjust="spacingAndGlyphs" >K1</text>
<path d="M621 242.5 H210.5 V373.5 H621" stroke="#303030" fill="none" stroke-width="1.2" />
<rect x="210.5" y="276" width="410.5" height="1.2" fill="#303030" />
<text x="234.00" y="263.1" font-size="11.6" fill="#111" stroke="#111" stroke-width="0.12" textLength="33.63" lengthAdjust="spacingAndGlyphs" >Parent</text>
<text x="445.30" y="263.1" font-size="11.6" fill="#111" stroke="#111" stroke-width="0.12" textLength="32.59" lengthAdjust="spacingAndGlyphs" >Childs</text>
<path d="M254.2 295.8 V312.2 M254.2 338.2 V355" stroke="#303030" fill="none" stroke-width="1" />
<rect x="232.3" y="312.7" width="43.3" height="25" fill="#fff" stroke="#111" stroke-width="2"/>
<text x="247.60" y="320" font-size="5.5" fill="#222" stroke="#222" stroke-width="0.07500000000000001" textLength="10.96" lengthAdjust="spacingAndGlyphs" >Gnd</text>
<text x="249.00" y="334.5" font-size="5.5" fill="#222" stroke="#222" stroke-width="0.07500000000000001" textLength="9.73" lengthAdjust="spacingAndGlyphs" >Vcc</text>
<text x="255.50" y="309.6" font-size="5" fill="#222" stroke="#222" stroke-width="0.04999999999999999" >7</text>
<text x="255.50" y="344.5" font-size="5" fill="#222" stroke="#222" stroke-width="0.04999999999999999" >14</text>
<text x="281.00" y="322.7" font-size="7.5" fill="#ff2828" stroke="#ff2828" stroke-width="0.05" textLength="10.96" lengthAdjust="spacingAndGlyphs" >IC1</text>
<text x="281.00" y="332.7" font-size="7.5" fill="#2a2aff" stroke="#2a2aff" stroke-width="0.05" textLength="16.47" lengthAdjust="spacingAndGlyphs" >7400</text>
<rect x="358.3" y="306.2" width="27.5" height="40" fill="#fff" stroke="#303030" stroke-width="1.2"/>
<path d="M344.7 312.8 H358.3 M344.7 339.8 H358.3 M385.8 326.3 H399.3" stroke="#303030" fill="none" stroke-width="1" />
<text x="368.50" y="320.3" font-size="12.5" fill="#111" stroke="#111" stroke-width="0.3" textLength="7.50" lengthAdjust="spacingAndGlyphs" >&amp;</text>
<text x="358.80" y="302.3" font-size="7" fill="#ff2828" stroke="#ff2828" stroke-width="0.05" textLength="16.20" lengthAdjust="spacingAndGlyphs" >IC1-1</text>
<text x="358.40" y="356.3" font-size="7.5" fill="#2a2aff" stroke="#2a2aff" stroke-width="0.05" textLength="16.47" lengthAdjust="spacingAndGlyphs" >7400</text>
<text x="354.80" y="311" font-size="5.2" fill="#222" stroke="#222" stroke-width="0.06" textLength="2.89" lengthAdjust="spacingAndGlyphs" >1</text>
<text x="354.80" y="338" font-size="5.2" fill="#222" stroke="#222" stroke-width="0.06" textLength="2.89" lengthAdjust="spacingAndGlyphs" >2</text>
<text x="387.30" y="324.5" font-size="5.2" fill="#222" stroke="#222" stroke-width="0.06" >3</text>
<rect x="425.3" y="306.2" width="27.5" height="40" fill="#fff" stroke="#303030" stroke-width="1.2"/>
<path d="M411.7 312.8 H425.3 M411.7 339.8 H425.3 M452.8 326.3 H466.3" stroke="#303030" fill="none" stroke-width="1" />
<text x="435.50" y="320.3" font-size="12.5" fill="#111" stroke="#111" stroke-width="0.3" textLength="7.50" lengthAdjust="spacingAndGlyphs" >&amp;</text>
<text x="425.80" y="302.3" font-size="7" fill="#ff2828" stroke="#ff2828" stroke-width="0.05" textLength="16.20" lengthAdjust="spacingAndGlyphs" >IC1-2</text>
<text x="425.40" y="356.3" font-size="7.5" fill="#2a2aff" stroke="#2a2aff" stroke-width="0.05" textLength="16.47" lengthAdjust="spacingAndGlyphs" >7400</text>
<text x="421.80" y="311" font-size="5.2" fill="#222" stroke="#222" stroke-width="0.06" textLength="2.89" lengthAdjust="spacingAndGlyphs" >4</text>
<text x="421.80" y="338" font-size="5.2" fill="#222" stroke="#222" stroke-width="0.06" textLength="2.89" lengthAdjust="spacingAndGlyphs" >5</text>
<text x="454.30" y="324.5" font-size="5.2" fill="#222" stroke="#222" stroke-width="0.06" >6</text>
<rect x="489.2" y="306.2" width="27.5" height="40" fill="#fff" stroke="#303030" stroke-width="1.2"/>
<path d="M475.59999999999997 312.8 H489.2 M475.59999999999997 339.8 H489.2 M516.7 326.3 H530.2" stroke="#303030" fill="none" stroke-width="1" />
<text x="499.40" y="320.3" font-size="12.5" fill="#111" stroke="#111" stroke-width="0.3" textLength="7.50" lengthAdjust="spacingAndGlyphs" >&amp;</text>
<text x="489.70" y="302.3" font-size="7" fill="#ff2828" stroke="#ff2828" stroke-width="0.05" textLength="16.20" lengthAdjust="spacingAndGlyphs" >IC1-3</text>
<text x="489.30" y="356.3" font-size="7.5" fill="#2a2aff" stroke="#2a2aff" stroke-width="0.05" textLength="16.47" lengthAdjust="spacingAndGlyphs" >7400</text>
<text x="485.70" y="311" font-size="5.2" fill="#222" stroke="#222" stroke-width="0.06" textLength="2.89" lengthAdjust="spacingAndGlyphs" >9</text>
<text x="482.70" y="338" font-size="5.2" fill="#222" stroke="#222" stroke-width="0.06" textLength="5.88" lengthAdjust="spacingAndGlyphs" >10</text>
<text x="518.20" y="324.5" font-size="5.2" fill="#222" stroke="#222" stroke-width="0.06" >8</text>
<rect x="553.25" y="306.2" width="27.5" height="40" fill="#fff" stroke="#303030" stroke-width="1.2"/>
<path d="M539.65 312.8 H553.25 M539.65 339.8 H553.25 M580.75 326.3 H594.25" stroke="#303030" fill="none" stroke-width="1" />
<text x="563.45" y="320.3" font-size="12.5" fill="#111" stroke="#111" stroke-width="0.3" textLength="7.50" lengthAdjust="spacingAndGlyphs" >&amp;</text>
<text x="553.75" y="302.3" font-size="7" fill="#ff2828" stroke="#ff2828" stroke-width="0.05" textLength="16.20" lengthAdjust="spacingAndGlyphs" >IC1-4</text>
<text x="553.35" y="356.3" font-size="7.5" fill="#2a2aff" stroke="#2a2aff" stroke-width="0.05" textLength="16.47" lengthAdjust="spacingAndGlyphs" >7400</text>
<text x="546.75" y="311" font-size="5.2" fill="#222" stroke="#222" stroke-width="0.06" textLength="5.88" lengthAdjust="spacingAndGlyphs" >12</text>
<text x="546.75" y="338" font-size="5.2" fill="#222" stroke="#222" stroke-width="0.06" textLength="5.88" lengthAdjust="spacingAndGlyphs" >13</text>
<text x="582.25" y="324.5" font-size="5.2" fill="#222" stroke="#222" stroke-width="0.06" >11</text>
<rect x="621" y="77" width="13" height="364" fill="#f0f0f0" />
<rect x="621" y="90" width="11" height="174" fill="#cdcdcd" />
<path d="M623.3 86.2 L626.2 83.2 L629.1 86.2" stroke="#505050" fill="none" stroke-width="1.5" />
<path d="M623.3 433.8 L626.2 436.8 L629.1 433.8" stroke="#505050" fill="none" stroke-width="1.5" />
<rect x="187" y="441" width="433" height="13" fill="#f0f0f0" />
<rect x="199" y="442" width="178" height="10" fill="#cdcdcd" />
<path d="M194.3 444.2 L191.3 447.1 L194.3 450" stroke="#505050" fill="none" stroke-width="1.5" />
<path d="M612.2 444.2 L615.2 447.1 L612.2 450" stroke="#505050" fill="none" stroke-width="1.5" />
<rect x="620" y="441" width="14" height="14" fill="#f0f0f0" />
<rect x="150" y="455" width="484" height="15" fill="#f0f0f0" />
<rect x="169" y="455" width="465" height="15" fill="#f4f4f4" />
<rect x="169" y="454" width="465" height="1" fill="#a0a0a0" />
<path d="M175 455 L179.5 465.5 L213.5 465.5 L218 455" stroke="#505050" fill="#fafafa" stroke-width="1" />
<text x="180.60" y="463.6" font-size="9" fill="#111" stroke="#111" stroke-width="0.16" textLength="30.00" lengthAdjust="spacingAndGlyphs" >1: Blatt 1</text>
<rect x="6" y="470" width="628" height="18" fill="#f0f0f0" />
<rect x="7" y="470" width="39" height="1" fill="#a0a0a0" />
<rect x="7" y="470" width="1" height="18" fill="#a0a0a0" />
<rect x="8" y="487" width="38" height="1" fill="#ffffff" />
<rect x="45" y="471" width="1" height="17" fill="#ffffff" />
<rect x="47" y="470" width="44" height="1" fill="#a0a0a0" />
<rect x="47" y="470" width="1" height="18" fill="#a0a0a0" />
<rect x="48" y="487" width="43" height="1" fill="#ffffff" />
<rect x="90" y="471" width="1" height="17" fill="#ffffff" />
<rect x="92" y="470" width="35" height="1" fill="#a0a0a0" />
<rect x="92" y="470" width="1" height="18" fill="#a0a0a0" />
<rect x="93" y="487" width="34" height="1" fill="#ffffff" />
<rect x="126" y="471" width="1" height="17" fill="#ffffff" />
<rect x="128" y="470" width="72" height="1" fill="#a0a0a0" />
<rect x="128" y="470" width="1" height="18" fill="#a0a0a0" />
<rect x="129" y="487" width="71" height="1" fill="#ffffff" />
<rect x="199" y="471" width="1" height="17" fill="#ffffff" />
<rect x="202" y="470" width="128" height="1" fill="#a0a0a0" />
<rect x="202" y="470" width="1" height="18" fill="#a0a0a0" />
<rect x="203" y="487" width="127" height="1" fill="#ffffff" />
<rect x="329" y="471" width="1" height="17" fill="#ffffff" />
<rect x="331" y="470" width="60" height="1" fill="#a0a0a0" />
<rect x="331" y="470" width="1" height="18" fill="#a0a0a0" />
<rect x="332" y="487" width="59" height="1" fill="#ffffff" />
<rect x="390" y="471" width="1" height="17" fill="#ffffff" />
<rect x="392" y="470" width="65" height="1" fill="#a0a0a0" />
<rect x="392" y="470" width="1" height="18" fill="#a0a0a0" />
<rect x="393" y="487" width="64" height="1" fill="#ffffff" />
<rect x="456" y="471" width="1" height="17" fill="#ffffff" />
<rect x="459" y="470" width="175" height="1" fill="#a0a0a0" />
<rect x="459" y="470" width="1" height="18" fill="#a0a0a0" />
<rect x="460" y="487" width="174" height="1" fill="#ffffff" />
<rect x="633" y="471" width="1" height="17" fill="#ffffff" />
<text x="9.70" y="478.3" font-size="8.5" fill="#222" stroke="#222" stroke-width="0.1" textLength="29.55" lengthAdjust="spacingAndGlyphs" >X: 123,0</text>
<text x="9.70" y="486.9" font-size="8.5" fill="#222" stroke="#222" stroke-width="0.1" textLength="25.54" lengthAdjust="spacingAndGlyphs" >Y: 20,0</text>
<text x="104.00" y="478.5" font-size="8.5" fill="#222" stroke="#222" stroke-width="0.1" textLength="9.77" lengthAdjust="spacingAndGlyphs" >1:1</text>
<text x="103.50" y="486.6" font-size="8.5" fill="#222" stroke="#222" stroke-width="0.1" textLength="11.06" lengthAdjust="spacingAndGlyphs" >mm</text>
<text x="132.50" y="478.5" font-size="8.5" fill="#222" stroke="#222" stroke-width="0.1" textLength="17.24" lengthAdjust="spacingAndGlyphs" >Grid:</text>
<text x="161.60" y="478.5" font-size="8.5" fill="#222" stroke="#222" stroke-width="0.1" textLength="16.46" lengthAdjust="spacingAndGlyphs" >1 mm</text>
<text x="132.50" y="486.6" font-size="8.5" fill="#222" stroke="#222" stroke-width="0.1" textLength="21.83" lengthAdjust="spacingAndGlyphs" >Zoom:</text>
<text x="161.60" y="486.6" font-size="8.5" fill="#222" stroke="#222" stroke-width="0.1" textLength="15.74" lengthAdjust="spacingAndGlyphs" >1,53</text>
<path d="M205.2 475.6 H216 M205.2 479.4 H216 M205.2 483.1 H216 M207.2 473.3 V485 M210.8 473.3 V485 M214.3 473.3 V485" stroke="#0a0a0a" fill="none" stroke-width="1.2" />
<rect x="223.5" y="476.8" width="10" height="4.8" rx="2.4" fill="none" stroke="#6a0a0a" stroke-width="1.9" transform="rotate(35 228.4 479.2)"/>
<rect x="241.5" y="475.4" width="4.6" height="4.2" fill="#9ab" stroke="#f02020" stroke-width="1"/>
<rect x="246" y="476.7" width="6" height="1.9" fill="#0a0a0a" />
<rect x="243" y="479.6" width="1.5" height="5.4" fill="#707070" />
<path d="M259.6 474.4 V482.6 H267.6" stroke="#1a1a1a" fill="none" stroke-width="1.1" />
<path d="M261.5 481 L266 476.5" stroke="#b0b0b0" fill="none" stroke-width="0.8" stroke-dasharray="1 1"/>
<text x="270.70" y="482.9" font-size="8.5" fill="#222" stroke="#222" stroke-width="0.1" textLength="12.59" lengthAdjust="spacingAndGlyphs" >45°</text>
<path d="M302.6 481.8 A3.4 3.4 0 1 1 302.8 476.8" stroke="#111" fill="none" stroke-width="1.4" />
<path d="M301.2 477.2 L305 477.2 L303.1 480.2 Z" stroke="none" fill="#111" stroke-width="1" />
<text x="308.80" y="482.9" font-size="8.5" fill="#222" stroke="#222" stroke-width="0.1" textLength="12.59" lengthAdjust="spacingAndGlyphs" >15°</text>
<rect x="335" y="478.5" width="32" height="1.2" fill="#333" />
<rect x="373" y="474.8" width="13.3" height="10.2" fill="none" stroke="#333" stroke-width="1.2"/>
<text x="461.00" y="478.3" font-size="8.5" fill="#222" stroke="#222" stroke-width="0.1" textLength="161.24" lengthAdjust="spacingAndGlyphs" >Edit: Select, move, rotate, delete elements ...</text>
<text x="461.00" y="486.6" font-size="8.5" fill="#222" stroke="#222" stroke-width="0.1" textLength="134.48" lengthAdjust="spacingAndGlyphs" >&lt;Ctrl&gt; disables grid, &lt;Space&gt; = zoom</text>
<path d="M626 487 L633 480" stroke="#b0b0b0" fill="none" stroke-width="0.8" />
<path d="M629 487 L633 483" stroke="#b0b0b0" fill="none" stroke-width="0.8" />
<path d="M632 487 L633 486" stroke="#b0b0b0" fill="none" stroke-width="0.8" />
</svg></body></html>
